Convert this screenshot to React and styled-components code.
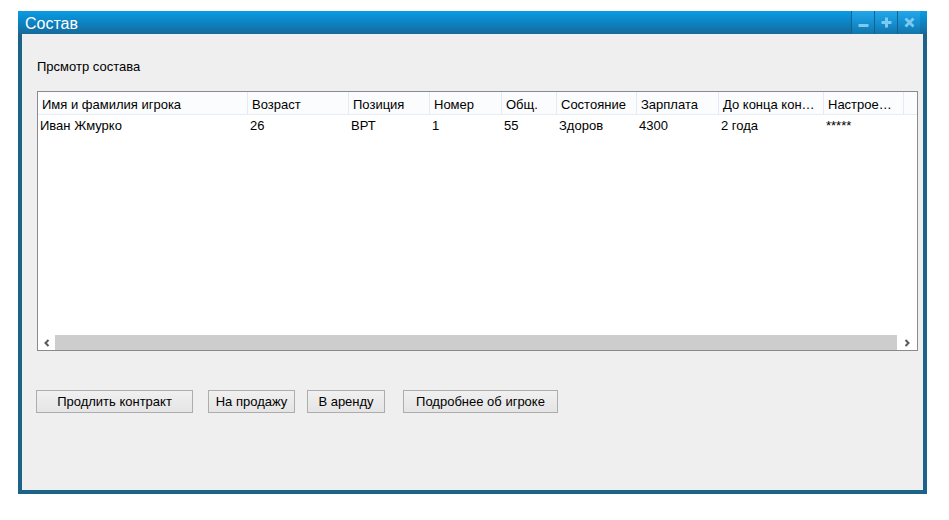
import React from 'react';
import styled, { createGlobalStyle } from 'styled-components';

const GlobalStyle = createGlobalStyle`
  body {
    margin: 0;
    background: #fff;
    font-family: "Liberation Sans", Arial, sans-serif;
  }
`;

const Page = styled.div`
  width: 949px;
  height: 520px;
  padding: 11px 0 0 18px;
  box-sizing: border-box;
`;

const Window = styled.div`
  width: 909px;
  height: 483px;
  box-sizing: border-box;
  background: #1b6389;
  padding: 0 4px 4px 4px;
  display: flex;
  flex-direction: column;
`;

const TitleBar = styled.div`
  height: 23px;
  margin: 0 -4px;
  padding-left: 7px;
  display: flex;
  align-items: center;
  background: linear-gradient(to bottom, #0c9be2 0%, #0b86c7 45%, #17699a 100%);
`;

const TitleText = styled.div`
  flex: 1;
  color: #fff;
  font-size: 16px;
  line-height: 25px;
  height: 23px;
`;

const TitleButtons = styled.div`
  display: flex;
  height: 23px;
  margin-right: 7px;
`;

const TitleButton = styled.div`
  width: 23px;
  height: 23px;
  box-sizing: border-box;
  border-left: 1px solid #11628f;
  background: linear-gradient(to bottom, #22a7ea 0%, #1590d2 50%, #1274ab 100%);
  display: flex;
  align-items: center;
  justify-content: center;
`;

const Body = styled.div`
  flex: 1;
  background: #efefef;
  padding: 25px 4px 0 15px;
  display: flex;
  flex-direction: column;
`;

const Caption = styled.div`
  font-size: 13px;
  color: #000;
  height: 32px;
  line-height: 16px;
`;

const Table = styled.div`
  width: 881px;
  height: 260px;
  box-sizing: border-box;
  border: 1px solid #8a8a8f;
  background: #fff;
  display: flex;
  flex-direction: column;
`;

const Grid = styled.div`
  flex: 1;
  display: grid;
  grid-template-columns: ${p => p.cols};
  grid-auto-rows: min-content;
`;

const HeadCell = styled.div`
  height: 23px;
  box-sizing: border-box;
  background: #fbfcfd;
  border-right: 1px solid #e3eaf3;
  border-bottom: 1px solid #e6ecf3;
  padding: 0 ${p => p.pad ?? 6}px 0 4px;
  font-size: 13px;
  line-height: 25px;
  color: #000;
  white-space: nowrap;
  overflow: hidden;
  text-overflow: ellipsis;
`;

const FillCell = styled(HeadCell)`
  border-right: none;
`;

const Cell = styled.div`
  height: 21px;
  padding-left: 2px;
  font-size: 13px;
  line-height: 21px;
  color: #000;
  white-space: nowrap;
  overflow: hidden;
`;

const Scrollbar = styled.div`
  height: 15px;
  display: flex;
  background: #fff;
`;

const Arrow = styled.div`
  width: ${p => p.w}px;
  display: flex;
  align-items: center;
  justify-content: center;
`;

const Thumb = styled.div`
  flex: 1;
  background: #cdcdcd;
`;

const Actions = styled.div`
  display: flex;
  margin-top: 39px;
  margin-left: -1px;
`;

const Button = styled.button`
  width: ${p => p.w}px;
  height: 23px;
  margin-right: ${p => p.gap}px;
  box-sizing: border-box;
  border: 1px solid #adadad;
  background: linear-gradient(to bottom, #f0f0f0, #e5e5e5);
  font-family: "Liberation Sans", Arial, sans-serif;
  font-size: 13px;
  color: #000;
  padding: 0;
`;

const columns = [
  { title: 'Имя и фамилия игрока', w: 210 },
  { title: 'Возраст', w: 101 },
  { title: 'Позиция', w: 81 },
  { title: 'Номер', w: 72 },
  { title: 'Общ.', w: 55 },
  { title: 'Состояние', w: 80 },
  { title: 'Зарплата', w: 82 },
  { title: 'До конца контракта', w: 105 },
  { title: 'Настроение', w: 80, pad: 5 },
];

const rows = [
  ['Иван Жмурко', '26', 'ВРТ', '1', '55', 'Здоров', '4300', '2 года', '*****'],
];

const buttons = [
  { label: 'Продлить контракт', w: 157, gap: 15 },
  { label: 'На продажу', w: 87, gap: 12 },
  { label: 'В аренду', w: 78, gap: 18 },
  { label: 'Подробнее об игроке', w: 155, gap: 0 },
];

const iconColor = '#7ccaf0';

function App() {
  const cols = columns.map(c => `${c.w}px`).join(' ') + ' 1fr';
  return (
    <Page>
      <GlobalStyle />
      <Window>
        <TitleBar>
          <TitleText>Состав</TitleText>
          <TitleButtons>
            <TitleButton>
              <svg width="11" height="11" viewBox="0 0 11 11">
                <rect x="0.5" y="7" width="10" height="3" fill={iconColor} />
              </svg>
            </TitleButton>
            <TitleButton>
              <svg width="11" height="11" viewBox="0 0 11 11">
                <rect x="0.5" y="4" width="10" height="3" fill={iconColor} />
                <rect x="4" y="0.5" width="3" height="10" fill={iconColor} />
              </svg>
            </TitleButton>
            <TitleButton>
              <svg width="11" height="11" viewBox="0 0 11 11">
                <path d="M1.5 1.5 L9.5 9.5 M9.5 1.5 L1.5 9.5" stroke={iconColor} strokeWidth="2.8" />
              </svg>
            </TitleButton>
          </TitleButtons>
        </TitleBar>
        <Body>
          <Caption>Прсмотр состава</Caption>
          <Table>
            <Grid cols={cols}>
              {columns.map(c => (
                <HeadCell key={c.title} pad={c.pad}>{c.title}</HeadCell>
              ))}
              <FillCell />
              {rows.map((r, i) => (
                <React.Fragment key={i}>
                  {r.map((v, j) => (
                    <Cell key={j}>{v}</Cell>
                  ))}
                  <Cell />
                </React.Fragment>
              ))}
            </Grid>
            <Scrollbar>
              <Arrow w={17}>
                <svg width="8" height="8" viewBox="0 0 8 8">
                  <path d="M5.5 1 L2.5 4 L5.5 7" stroke="#5a5a5a" strokeWidth="2" fill="none" />
                </svg>
              </Arrow>
              <Thumb />
              <Arrow w={20}>
                <svg width="8" height="8" viewBox="0 0 8 8">
                  <path d="M2.5 1 L5.5 4 L2.5 7" stroke="#5a5a5a" strokeWidth="2" fill="none" />
                </svg>
              </Arrow>
            </Scrollbar>
          </Table>
          <Actions>
            {buttons.map(b => (
              <Button key={b.label} w={b.w} gap={b.gap}>{b.label}</Button>
            ))}
          </Actions>
        </Body>
      </Window>
    </Page>
  );
}

export default App;
